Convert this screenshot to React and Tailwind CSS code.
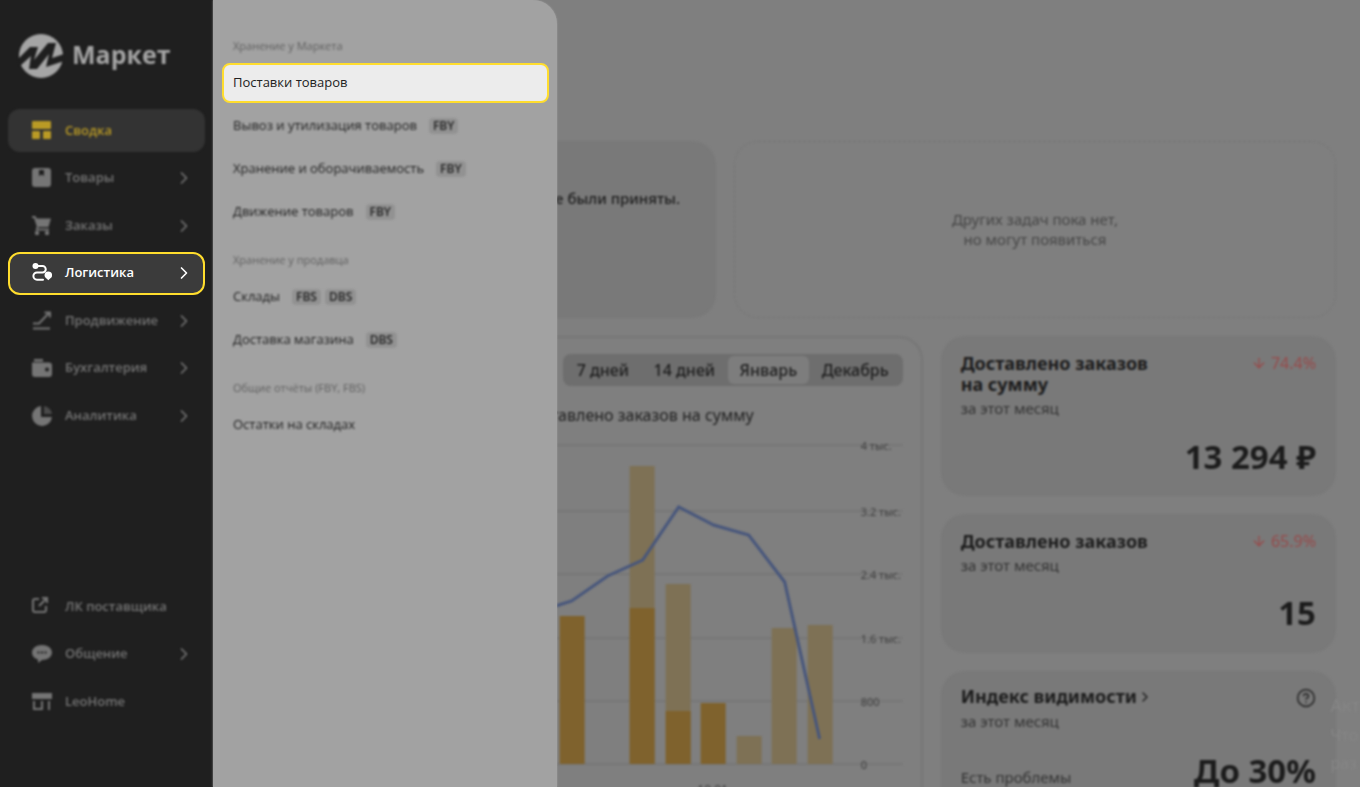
import { ArrowDown, ChevronRight, CircleHelp } from 'lucide-react';

const mainNav = [
  { label: 'Сводка', icon: 'summary', selected: true },
  { label: 'Товары', icon: 'goods', arrow: true },
  { label: 'Заказы', icon: 'cart', arrow: true },
  { label: 'Логистика', icon: 'route', arrow: true, open: true },
  { label: 'Продвижение', icon: 'growth', arrow: true },
  { label: 'Бухгалтерия', icon: 'wallet', arrow: true },
  { label: 'Аналитика', icon: 'pie', arrow: true },
];

const bottomNav = [
  { label: 'ЛК поставщика', icon: 'external' },
  { label: 'Общение', icon: 'chat', arrow: true },
  { label: 'LeoHome', icon: 'shop' },
];

const sections = [
  {
    title: 'Хранение у Маркета',
    items: [
      { label: 'Поставки товаров', tags: [], active: true },
      { label: 'Вывоз и утилизация товаров', tags: ['FBY'] },
      { label: 'Хранение и оборачиваемость', tags: ['FBY'] },
      { label: 'Движение товаров', tags: ['FBY'] },
    ],
  },
  {
    title: 'Хранение у продавца',
    items: [
      { label: 'Склады', tags: ['FBS', 'DBS'] },
      { label: 'Доставка магазина', tags: ['DBS'] },
    ],
  },
  {
    title: 'Общие отчёты (FBY, FBS)',
    items: [{ label: 'Остатки на складах', tags: [] }],
  },
];

const periods = ['7 дней', '14 дней', 'Январь', 'Декабрь'];

const gridLines = [
  { y: 5, label: '4 тыс.' },
  { y: 71, label: '3.2 тыс.' },
  { y: 134, label: '2.4 тыс.' },
  { y: 198, label: '1.6 тыс.' },
  { y: 261, label: '800' },
  { y: 324, label: '0' },
];

const bars = [
  { x: 417, solid: 176 },
  { x: 487, light: 26, solid: 168 },
  { x: 523, light: 144, solid: 271 },
  { x: 558, solid: 263 },
  { x: 594, light: 296 },
  { x: 629, light: 188 },
  { x: 665, light: 185 },
];

function NavIcon({ name }) {
  return (
    <svg viewBox="0 0 20 20" className="size-5 shrink-0" fill="currentColor" aria-hidden="true">
      {name === 'summary' && (
        <>
          <rect x="0" y="0" width="19" height="8" rx="1" />
          <rect x="0" y="10" width="8" height="8" rx="1" />
          <rect x="11" y="10" width="8" height="8" rx="1" />
        </>
      )}
      {name === 'goods' && (
        <path fillRule="evenodd" d="M3 0h13a3 3 0 0 1 3 3v13a3 3 0 0 1-3 3H3a3 3 0 0 1-3-3V3a3 3 0 0 1 3-3Zm4 2v6l2.500-1.500L12 8V2Z" />
      )}
      {name === 'cart' && (
        <>
          <path d="M0 0h3.500l1.200 2.500H19l-2.500 8.500H6.500l-.5 1.500h11v2H3.500l1.300-4L2 2H0Z" />
          <circle cx="5" cy="17" r="2.200" />
          <circle cx="15" cy="17" r="2.200" />
        </>
      )}
      {name === 'route' && (
        <>
          <circle cx="3.500" cy="3" r="3" />
          <path
            d="M4 3h6.500a2.800 2.800 0 0 1 0 6.500H5a3.600 3.600 0 0 0 0 7.200h6"
            fill="none"
            stroke="currentColor"
            strokeWidth="2"
            strokeLinecap="round"
          />
          <path d="M16.300 8.500a3.800 3.800 0 0 1 3.800 3.800c0 2.500-2.300 3-3.800 5-1.500-2-3.800-2.500-3.800-5a3.800 3.800 0 0 1 3.800-3.800Z" />
        </>
      )}
      {name === 'growth' && (
        <path
          d="M1 12.500h6L17 2M12.500 1.500h5.500v5M1 17.500h17"
          fill="none"
          stroke="currentColor"
          strokeWidth="2"
        />
      )}
      {name === 'wallet' && (
        <path
          fillRule="evenodd"
          d="M2 1h9v2.500H2ZM0 4.500h17a3 3 0 0 1 3 3V16a3 3 0 0 1-3 3H3a3 3 0 0 1-3-3ZM15 9.500a2 2 0 1 0 0 4 2 2 0 0 0 0-4Z"
        />
      )}
      {name === 'pie' && (
        <>
          <path d="M9 0a10 10 0 1 0 11 11H9Z" />
          <path d="M12 0a10 10 0 0 1 8 8h-8Z" opacity=".5" />
        </>
      )}
      {name === 'external' && (
        <path
          d="M7 2H3a2 2 0 0 0-2 2v9a2 2 0 0 0 2 2h9a2 2 0 0 0 2-2V9M10 1h5v5M15 1 7 9"
          fill="none"
          stroke="currentColor"
          strokeWidth="2"
        />
      )}
      {name === 'chat' && (
        <path
          fillRule="evenodd"
          d="M10 1c5.500 0 10 3 10 7.500S15.500 16 10 16L6 19v-3.500C2.500 14.500 0 12 0 8.500 0 4 4.500 1 10 1ZM5.500 7.500v2h2v-2Zm3.500 0v2h2v-2Zm3.500 0v2h2v-2Z"
        />
      )}
      {name === 'shop' && (
        <path d="M0 1h20v6H0ZM1 9h2v7h6V9h2v9H1ZM16 9h2v9h-2Z" />
      )}
    </svg>
  );
}

function NavItem({ item }) {
  let state = 'text-[#757575] blur-[1px]';
  if (item.selected) state = 'bg-[#333333] text-[#b99a25] blur-[1px]';
  if (item.open) state = 'border-2 border-[#ffdd2d] bg-[#3b3b3b] text-white';

  return (
    <button
      type="button"
      className={`flex h-[43px] w-full items-center rounded-xl text-left text-[13px] font-semibold ${
        item.open ? 'px-[22px]' : 'px-6'
      } ${state}`}
    >
      <NavIcon name={item.icon} />
      <span className="ml-[13px] flex-1">{item.label}</span>
      {item.arrow && <ChevronRight className="-mr-[13px] size-5" strokeWidth={2} />}
    </button>
  );
}

function Sidebar() {
  return (
    <nav className="flex w-[213px] flex-col bg-[#1f1f1f] px-2 pt-[33px] pb-16">
      <a href="#" className="flex items-center gap-2 pl-2.5 text-[#a5a5a5] blur-[1px]">
        <svg viewBox="0 0 46 46" className="size-[46px]" aria-hidden="true">
          <circle cx="23" cy="23" r="22" fill="currentColor" />
          <path
            d="M0 26 12 14h8l-4 13L30 10h8l-4 15 12-4v7l-18 6 3-13-12 15h-8l2-13L2 33Z"
            fill="#1f1f1f"
          />
        </svg>
        <span className="pb-1 text-[25px] leading-8 font-bold">Маркет</span>
      </a>
      <div className="mt-[30px] flex h-[328px] flex-col justify-between">
        {mainNav.map((item) => (
          <NavItem key={item.label} item={item} />
        ))}
      </div>
      <div className="mt-auto flex h-[138px] flex-col justify-between">
        {bottomNav.map((item) => (
          <NavItem key={item.label} item={item} />
        ))}
      </div>
    </nav>
  );
}

function Drawer() {
  return (
    <div className="w-[344px] rounded-tr-3xl bg-[#a2a2a2] pt-[38px] pr-2 pl-[9px] shadow-[0_0_2px_#a2a2a2]">
      {sections.map((section) => (
        <section key={section.title} className="mb-5">
          <h2 className="mb-[9px] pl-[11px] text-[11px] leading-4 text-[#5f5f5f] blur-[1px]">
            {section.title}
          </h2>
          <ul className="flex flex-col gap-[3px]">
            {section.items.map((item) => (
              <li key={item.label}>
                <a
                  href="#"
                  className={`flex h-10 items-center rounded-lg border-2 px-[9px] pb-px text-[13px] ${
                    item.active
                      ? 'border-[#ffdd2d] bg-[#ececec] text-[#222222]'
                      : 'border-transparent font-medium text-[#222222] blur-[1px]'
                  }`}
                >
                  <span className="mr-3">{item.label}</span>
                  {item.tags.map((tag) => (
                    <span key={tag} className="mr-1 rounded-sm bg-[#929292] px-1 text-xs font-semibold">
                      {tag}
                    </span>
                  ))}
                </a>
              </li>
            ))}
          </ul>
        </section>
      ))}
    </div>
  );
}

function Chart() {
  return (
    <svg viewBox="0 0 760 360" preserveAspectRatio="xMaxYMin meet" className="mt-3 h-[360px] w-full">
      {gridLines.map((line) => (
        <line key={line.y} x1="0" x2="760" y1={line.y} y2={line.y} stroke="#6f6f6f" strokeWidth="1" />
      ))}
      {bars.map((bar) => (
        <g key={bar.x}>
          {bar.light && <rect x={bar.x} y={bar.light} width="25" height={324 - bar.light} fill="#7e7155" />}
          {bar.solid && <rect x={bar.x} y={bar.solid} width="25" height={324 - bar.solid} fill="#7f622d" />}
        </g>
      ))}
      <polyline
        points="413,166 429,161 465,136 500,120 536,67 571,85 606,95 642,142 677,299"
        fill="none"
        stroke="#47567c"
        strokeWidth="3"
      />
      {gridLines.map((line) => (
        <text key={line.label} x="718" y={line.y + 5} fontSize="11" fill="#404040">
          {line.label}
        </text>
      ))}
      <text x="570" y="354" fontSize="12" textAnchor="middle" fill="#404040">
        10.01
      </text>
    </svg>
  );
}

function Delta({ value }) {
  return (
    <span className="flex items-center gap-1 text-base leading-5 text-[#974a4a]">
      <ArrowDown className="size-4" />
      {value}
    </span>
  );
}

function StatCard({ title, corner, note, value, className }) {
  return (
    <article className={`flex flex-col rounded-3xl bg-[#797979] px-5 ${className}`}>
      <div className="flex items-start justify-between">
        <h3 className="w-[200px] text-lg leading-[21px] font-bold text-[#1c1c1c]">{title}</h3>
        {corner}
      </div>
      <p className="mt-[3px] text-[15px] leading-5 text-[#333333]">за этот месяц</p>
      <div className="mt-auto flex items-end justify-between">
        <span className="mb-1 text-[15px] leading-5 text-[#333333]">{note}</span>
        <strong className="text-[33px] leading-10 font-bold text-[#1c1c1c]">{value}</strong>
      </div>
    </article>
  );
}

function Dashboard() {
  return (
    <main className="flex flex-col gap-[18px] pt-[141px] pr-6 pl-[114px] blur-[1px]">
      <div className="grid grid-cols-2 gap-[18px]">
        <article className="h-[177px] rounded-3xl bg-[#797979] px-9 pt-[45px] text-right text-[15px] leading-6 font-medium text-[#1c1c1c]">
          не были приняты.
        </article>
        <article className="flex items-center justify-center rounded-3xl border border-dashed border-[#757575] pb-0.5 text-center text-[15px] leading-5 text-[#464646]">
          <p>
            Других задач пока нет,
            <br />
            но могут появиться
          </p>
        </article>
      </div>
      <div className="grid grid-cols-3 gap-[18px]">
        <section className="col-span-2 rounded-3xl border-2 border-[#767676] px-[18px] pt-4">
          <div className="ml-auto flex h-8 w-[340px] items-center justify-between rounded-lg bg-[#6e6e6e] p-0.5">
            {periods.map((period) => (
              <button
                key={period}
                type="button"
                className={`h-7 rounded-md px-3 text-base leading-6 font-medium text-[#1c1c1c] ${
                  period === 'Январь' ? 'bg-[#7d7d7d]' : ''
                }`}
              >
                {period}
              </button>
            ))}
          </div>
          <p className="mt-[17px] mb-[13px] pr-[149px] text-right text-base leading-6 text-[#1f1f1f]">
            Доставлено заказов на сумму
          </p>
          <Chart />
        </section>
        <aside className="flex flex-col gap-[18px]">
          <StatCard
            title="Доставлено заказов на сумму"
            corner={<Delta value="74.4%" />}
            value="13 294 ₽"
            className="h-[160px] pt-[17px] pb-[19px]"
          />
          <StatCard
            title="Доставлено заказов"
            corner={<Delta value="65.9%" />}
            value="15"
            className="h-[139px] pt-[17px] pb-5"
          />
          <StatCard
            title={
              <a href="#" className="flex items-center whitespace-nowrap">
                Индекс видимости
                <ChevronRight className="size-4" />
              </a>
            }
            corner={<CircleHelp className="mt-0.5 size-5 text-[#2c2c2c]" />}
            note="Есть проблемы"
            value="До 30%"
            className="h-[160px] pt-[15px] pb-10"
          />
        </aside>
      </div>
    </main>
  );
}

export default function App() {
  return (
    <div className="relative h-screen overflow-hidden bg-[#7f7f7f] font-['Noto_Sans',sans-serif]">
      <Dashboard />
      <div className="absolute inset-y-0 left-0 flex font-['Open_Sans',sans-serif]">
        <Sidebar />
        <Drawer />
      </div>
      <div className="absolute right-0 bottom-[10px] whitespace-nowrap text-[#868686] blur-[1px]">
        <p className="text-lg leading-8">Акт</p>
        <p className="text-base leading-7">Что</p>
        <p className="text-base leading-7">раз</p>
      </div>
    </div>
  );
}
